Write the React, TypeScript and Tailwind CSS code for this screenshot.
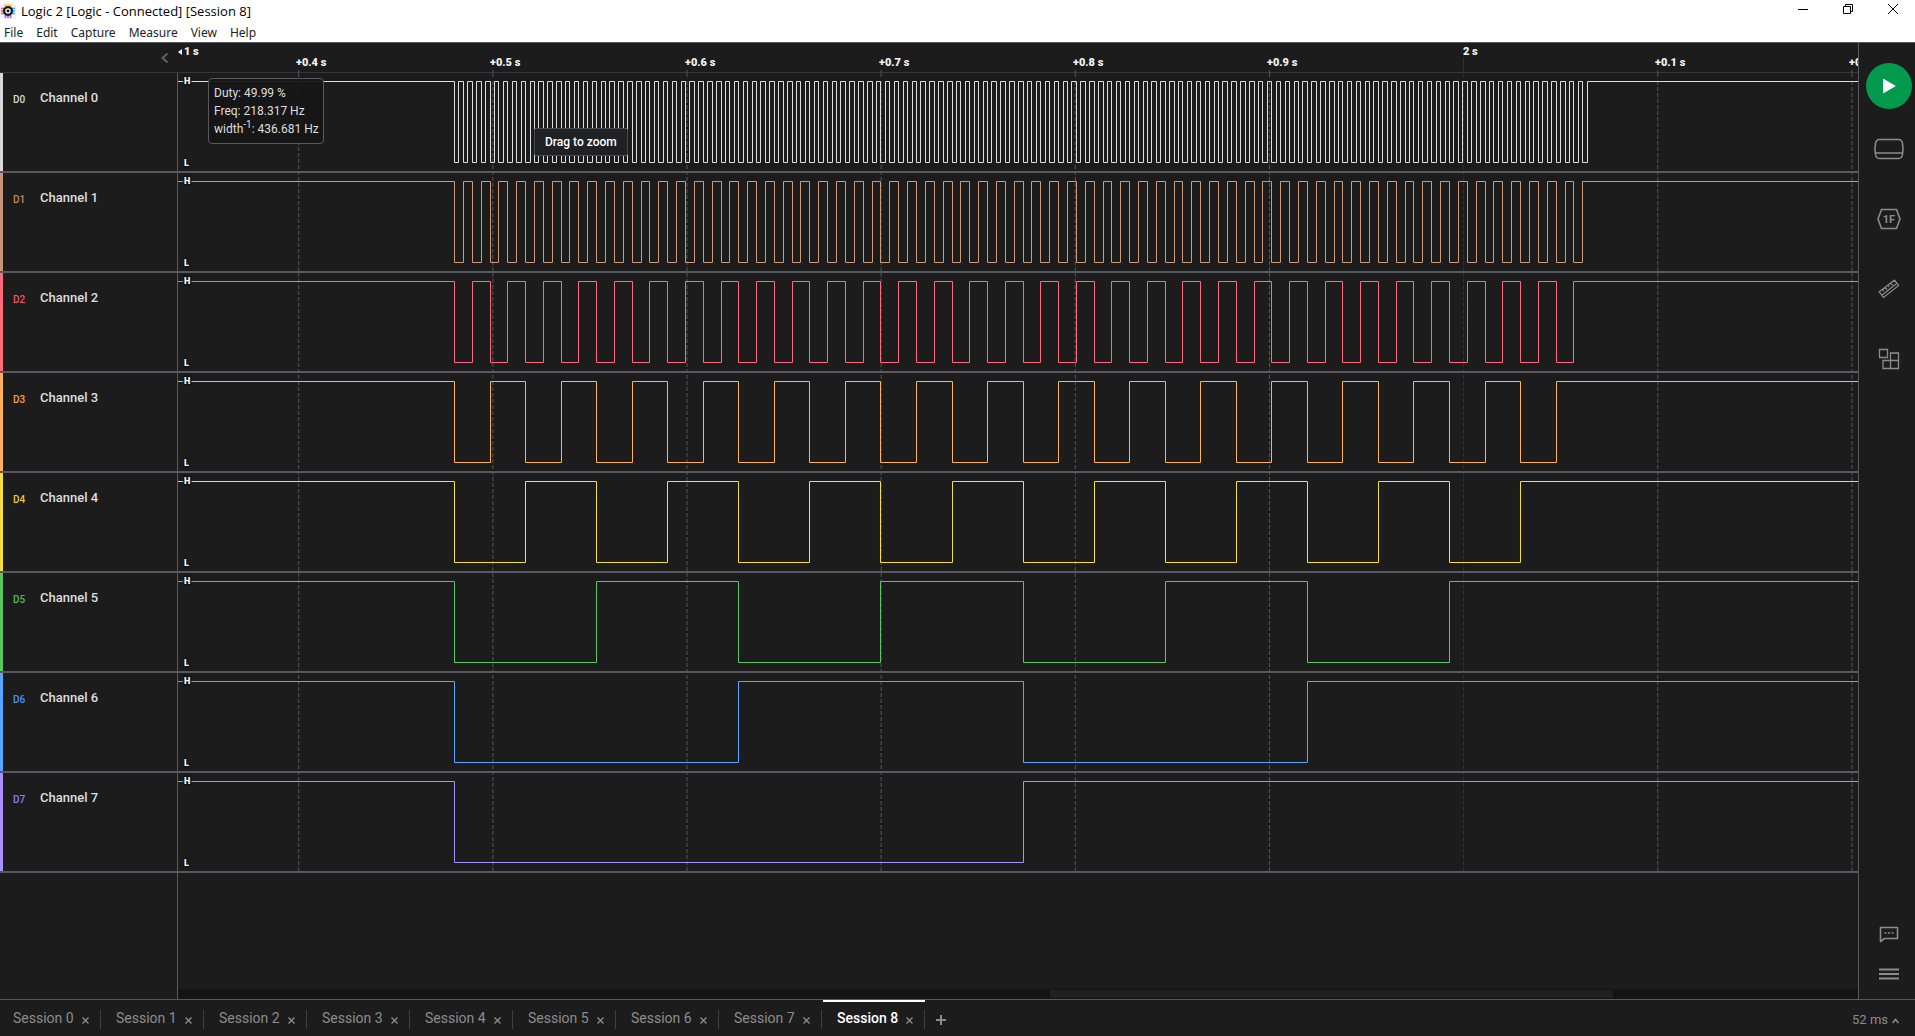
import React, { useState } from 'react';

interface Channel {
  id: string;
  name: string;
  barClass: string;
  textClass: string;
  color: string;
}

const CHANNELS: Channel[] = [
  { id: 'D0', name: 'Channel 0', barClass: 'bg-[#d9d9d9]', textClass: 'text-[#d9d9d9]', color: '#dedede' },
  { id: 'D1', name: 'Channel 1', barClass: 'bg-[#c8957a]', textClass: 'text-[#c68a5e]', color: '#cf997b' },
  { id: 'D2', name: 'Channel 2', barClass: 'bg-[#ff6b7a]', textClass: 'text-[#f2566b]', color: '#ff6b7a' },
  { id: 'D3', name: 'Channel 3', barClass: 'bg-[#ffb15c]', textClass: 'text-[#f7a145]', color: '#ffb15c' },
  { id: 'D4', name: 'Channel 4', barClass: 'bg-[#f5dd42]', textClass: 'text-[#e8cc2c]', color: '#f5dd42' },
  { id: 'D5', name: 'Channel 5', barClass: 'bg-[#59c764]', textClass: 'text-[#4dba5a]', color: '#59c764' },
  { id: 'D6', name: 'Channel 6', barClass: 'bg-[#58a6ff]', textClass: 'text-[#4794f2]', color: '#58a6ff' },
  { id: 'D7', name: 'Channel 7', barClass: 'bg-[#ab8fff]', textClass: 'text-[#9877f5]', color: '#ab8fff' },
];

const MENUS = ['File', 'Edit', 'Capture', 'Measure', 'View', 'Help'];
const SESSIONS = Array.from({ length: 9 }, (_, i) => `Session ${i}`);

// Time axis, in pixels from the left edge of the graph
const TICK_START = 120.7;
const TICK_STEP = 194.15;
const TICKS = ['+0.4 s', '+0.5 s', '+0.6 s', '+0.7 s', '+0.8 s', '+0.9 s', '2 s', '+0.1 s', '+0.2 s'];

// 8 bit counter on D0..D7: starts at 0 and stops at 255
const COUNT_START = 276.5;
const COUNT_STEP = 4.442;
const COUNT_MAX = 255;
const HIGH_Y = 8.5;
const LOW_Y = 89.5;
const FAR_RIGHT = 8000;

const tickX = (index: number) => TICK_START + index * TICK_STEP;
const isMajor = (label: string) => !label.startsWith('+');

function wavePath(bit: number) {
  let d = `M0 ${HIGH_Y}`;
  let high = true;
  for (let n = 0; n <= COUNT_MAX; n++) {
    const next = ((n >> bit) & 1) === 1;
    if (next !== high) {
      const x = Math.floor(COUNT_START + n * COUNT_STEP) + 0.5;
      d += `H${x}V${next ? HIGH_Y : LOW_Y}`;
      high = next;
    }
  }
  return `${d}H${FAR_RIGHT}`;
}

function AppLogo() {
  return (
    <svg width="16" height="16" viewBox="0 0 16 16" aria-hidden="true">
      <rect width="16" height="16" rx="3" fill="#f3f1f6" />
      <path d="M5.5 1v3M8 1v3M10.5 1v3" stroke="#ffc21a" strokeWidth="1.6" />
      <path d="M1 5.5h3M1 8h3M1 10.5h3" stroke="#ff5263" strokeWidth="1.6" />
      <path d="M12 5.5h3M12 8h3M12 10.5h3" stroke="#2fb4f5" strokeWidth="1.6" />
      <path d="M5.5 12v3M8 12v3M10.5 12v3" stroke="#a05cff" strokeWidth="1.6" />
      <circle cx="8" cy="8" r="5" fill="#17171f" />
      <circle cx="8" cy="8" r="2.1" fill="none" stroke="#fff" strokeWidth="1.3" />
    </svg>
  );
}

function TitleBar() {
  return (
    <header className="bg-white text-black">
      <div className="flex h-[22px] items-center justify-between">
        <div className="flex items-center gap-[5px] font-['Open_Sans',sans-serif] text-[13px] leading-[20px]">
          <AppLogo />
          <h1>Logic 2 [Logic - Connected] [Session 8]</h1>
        </div>
        <div className="flex gap-px self-start">
          <button aria-label="Minimize" className="flex h-[18px] w-11 items-center justify-center">
            <svg width="10" height="10" viewBox="0 0 10 10">
              <path d="M0 5.5h10" stroke="#000" />
            </svg>
          </button>
          <button aria-label="Restore" className="flex h-[18px] w-11 items-center justify-center">
            <svg width="10" height="10" viewBox="0 0 10 10" fill="none" stroke="#000">
              <path d="M.5 2.5h7v7h-7zM2.5 2.5v-2h7v7h-2" />
            </svg>
          </button>
          <button aria-label="Close" className="flex h-[18px] w-11 items-center justify-center">
            <svg width="10" height="10" viewBox="0 0 10 10" stroke="#000">
              <path d="M0 0l10 10M10 0L0 10" />
            </svg>
          </button>
        </div>
      </div>
      <nav className="flex h-5 items-center gap-[13px] pt-0.5 pl-1 font-['Noto_Sans',sans-serif] text-[12px] leading-[20px] text-[#222]">
        {MENUS.map((menu) => (
          <button key={menu}>{menu}</button>
        ))}
      </nav>
    </header>
  );
}

function Ruler() {
  return (
    <div className="flex h-[30px] shrink-0 border-b border-[#35353a]">
      <div className="flex w-[178px] shrink-0 items-center justify-end pr-2">
        <button aria-label="Collapse channels" className="p-px">
          <svg width="8" height="12" viewBox="0 0 8 12" fill="none" stroke="#626262" strokeWidth="1.8">
            <path d="M6.5 1.5L1.5 6l5 4.5" />
          </svg>
        </button>
      </div>
      <div className="relative flex-1 overflow-hidden text-[11px] leading-[14px] font-black text-[#f2f2f2]">
        <span className="absolute top-0.5 left-0 flex items-center gap-0.5">
          <svg width="4" height="6" viewBox="0 0 4 6" fill="#f2f2f2">
            <path d="M4 0v6L0 3z" />
          </svg>
          1 s
        </span>
        {TICKS.map((label, i) => (
          <span
            key={label}
            className={`absolute whitespace-nowrap ${isMajor(label) ? 'top-0.5' : 'top-[13px] -ml-0.5'}`}
            style={{ left: Math.floor(tickX(i)) }}
          >
            {label}
          </span>
        ))}
      </div>
    </div>
  );
}

function GridLines() {
  return (
    <svg className="absolute inset-y-0 right-0 left-[178px] h-full w-[calc(100%-178px)] overflow-visible" aria-hidden="true">
      {TICKS.map((label, i) => (
        <g key={label} stroke={isMajor(label) ? '#333' : '#555'}>
          <line x1={tickX(i)} x2={tickX(i)} y1={isMajor(label) ? -15 : -3} y2={4} />
          <line x1={tickX(i)} x2={tickX(i)} y1={8} y2="100%" strokeDasharray="4 2" />
        </g>
      ))}
    </svg>
  );
}

function LevelMark({ y, children }: { y: number; children: string }) {
  return (
    <text
      x="6"
      y={y}
      fill="#f5f5f5"
      stroke="#141414"
      strokeWidth="3"
      paintOrder="stroke"
      className="text-[9px] font-black"
    >
      {children}
    </text>
  );
}

function ChannelRow({ channel, bit }: { channel: Channel; bit: number }) {
  return (
    <div className="relative flex h-[100px] border-b-2 border-[#58585e]">
      <div className="flex w-[178px] shrink-0 border-r border-[#58585e]">
        <div className={`w-[3px] ${channel.barClass}`} />
        <div className="flex h-[34px] items-end pl-[10px] leading-[15px]">
          <span className={`w-[27px] text-[10px] font-medium ${channel.textClass}`}>{channel.id}</span>
          <span className="pb-0.5 text-[13px] font-medium text-[#dedede]">{channel.name}</span>
        </div>
      </div>
      <svg className="h-[98px] w-0 flex-1">
        <path d={wavePath(bit)} fill="none" stroke={channel.color} />
        <LevelMark y={11}>H</LevelMark>
        <LevelMark y={93}>L</LevelMark>
      </svg>
    </div>
  );
}

function MeasureTooltip() {
  return (
    <div className="absolute top-[5px] left-[208px] w-[116px] rounded-sm border border-[#58585e] bg-[#161616f2] px-[5px] py-[5px] text-[12px] leading-[18px] whitespace-nowrap text-[#dedede]">
      <p>Duty: 49.99 %</p>
      <p>Freq: 218.317 Hz</p>
      <p>
        width<sup className="text-[10px]">-1</sup>: 436.681 Hz
      </p>
    </div>
  );
}

function Graph() {
  return (
    <main className="flex min-w-0 flex-1 flex-col overflow-hidden">
      <Ruler />
      <div className="relative">
        <GridLines />
        {CHANNELS.map((channel, bit) => (
          <ChannelRow key={channel.id} channel={channel} bit={bit} />
        ))}
        <MeasureTooltip />
        <div className="absolute top-[55px] left-[534px] rounded-xs border border-[#4a4b50] bg-[#202124] px-[10px] py-[5px] text-[12px] leading-[16px] font-medium text-white">
          Drag to zoom
        </div>
      </div>
      <div className="flex flex-1">
        <div className="w-[178px] shrink-0 border-r border-[#58585e]" />
        <div className="flex flex-1 flex-col justify-end">
          <div className="h-[10px] bg-[#141414] py-px">
            <div className="ml-[51.9%] h-2 w-[33.5%] bg-[#202020]" />
          </div>
        </div>
      </div>
    </main>
  );
}

function SideBar() {
  return (
    <aside className="flex w-[57px] shrink-0 flex-col items-center border-l border-[#58585e] pt-5 pl-1 text-[#8c8c8c]">
      <button aria-label="Start capture" className="flex size-[46px] items-center justify-center rounded-full bg-[#039a4d]">
        <svg width="14" height="16" viewBox="0 0 14 16" fill="#fff">
          <path d="M1 1.6Q1 .6 2 1.1L13 7.4Q14 8 13 8.6L2 14.9Q1 15.4 1 14.4z" />
        </svg>
      </button>
      <button aria-label="Device" className="mt-7 flex h-6 items-center">
        <svg width="32" height="22" viewBox="0 0 32 22" fill="none" stroke="currentColor" strokeWidth="1.5">
          <path d="M6.5 1.5h19c2.5 0 3.6 1.5 4 4 .7 3.5.7 7.5 0 11-.4 2.5-1.5 4-4 4h-19c-2.5 0-3.6-1.5-4-4-.7-3.5-.7-7.5 0-11 .4-2.5 1.5-4 4-4zM2 15h28" />
        </svg>
      </button>
      <button aria-label="Analyzers" className="mt-[46px] flex h-6 items-center">
        <svg width="24" height="22" viewBox="0 0 24 22" fill="none" stroke="currentColor" strokeWidth="1.6">
          <path d="M4.5 1.5h15L23 11l-3.5 9.5h-15L1 11z" />
          <text x="12" y="15" textAnchor="middle" fill="currentColor" stroke="none" className="text-[11px] font-bold">
            1F
          </text>
        </svg>
      </button>
      <button aria-label="Measurements" className="mt-[46px] flex h-6 items-center">
        <svg width="22" height="20" viewBox="0 0 22 20" fill="none" stroke="currentColor" strokeWidth="1.2">
          <path d="M1.2 12.8L16.5 1.2l4.2 5.2L5.5 18.4zM3.8 16.2L19 4.2M4.5 10.5l1.3 1.6M7.2 8.4l1.8 2.2M10 6.2l1.3 1.6M12.7 4.1l1.8 2.2" />
        </svg>
      </button>
      <button aria-label="Extensions" className="mt-[46px] flex h-6 items-center">
        <svg width="22" height="22" viewBox="0 0 22 22" fill="none" stroke="currentColor" strokeWidth="1.3">
          <path d="M1.500 1.500h8v8h-8zM5 12.500h7.500v8H5zM12.500 12.500h8v8h-8zM12.500 5h8v7.500h-8z" />
        </svg>
      </button>
      <div className="mt-auto flex flex-col items-center gap-[23px] pb-[18px]">
        <button aria-label="Feedback">
          <svg width="20" height="18" viewBox="0 0 20 18" fill="none" stroke="currentColor" strokeWidth="1.6">
            <path d="M1.500 15.500v-14h17v11h-13z" strokeLinejoin="round" />
            <path d="M5.500 7h2M9 7h2M12.500 7h2" />
          </svg>
        </button>
        <button aria-label="Menu">
          <svg width="20" height="14" viewBox="0 0 20 14" stroke="currentColor" strokeWidth="2">
            <path d="M0 2.500h20M0 7h20M0 11.500h20" />
          </svg>
        </button>
      </div>
    </aside>
  );
}

export default function App() {
  const [active, setActive] = useState(8);

  return (
    <div className="flex h-screen flex-col overflow-hidden bg-[#1c1c1c] font-['Roboto',sans-serif]">
      <TitleBar />
      <div className="flex min-h-0 flex-1 border-y border-[#58585e]">
        <Graph />
        <SideBar />
      </div>

      <footer className="flex h-9 shrink-0 justify-between text-[14px] text-[#8c8c8c]">
        <div className="-ml-px flex gap-px">
          {SESSIONS.map((session, i) => (
            <div
              key={session}
              className={`flex w-[102px] border-t-2 pt-2 pb-[7px] ${
                i === active ? 'border-white font-medium text-white' : 'border-transparent'
              }`}
            >
              <div className="flex flex-1 items-center justify-between border-r border-[#3f3f42] pr-[11px] pl-[14px] leading-[16px]">
                <button className="pb-[3px] whitespace-nowrap" onClick={() => setActive(i)}>
                  {session}
                </button>
                <button aria-label={`Close ${session}`} className="pt-px text-[#8c8c8c]">
                  <svg width="7" height="7" viewBox="0 0 7 7" stroke="currentColor" strokeWidth="1.3">
                    <path d="M.5.5l6 6M6.5.5l-6 6" />
                  </svg>
                </button>
              </div>
            </div>
          ))}
          <button aria-label="Add session" className="pt-1 pl-[10px]">
            <svg width="10" height="10" viewBox="0 0 10 10" stroke="currentColor" strokeWidth="2">
              <path d="M0 5h10M5 0v10" />
            </svg>
          </button>
        </div>
        <button className="flex items-center gap-1 pt-1 pr-4 text-[13px]">
          52 ms
          <svg className="mt-0.5" width="7" height="6" viewBox="0 0 7 6" fill="none" stroke="currentColor" strokeWidth="1.5">
            <path d="M.5 5l3-3.500 3 3.500" />
          </svg>
        </button>
      </footer>
    </div>
  );
}
